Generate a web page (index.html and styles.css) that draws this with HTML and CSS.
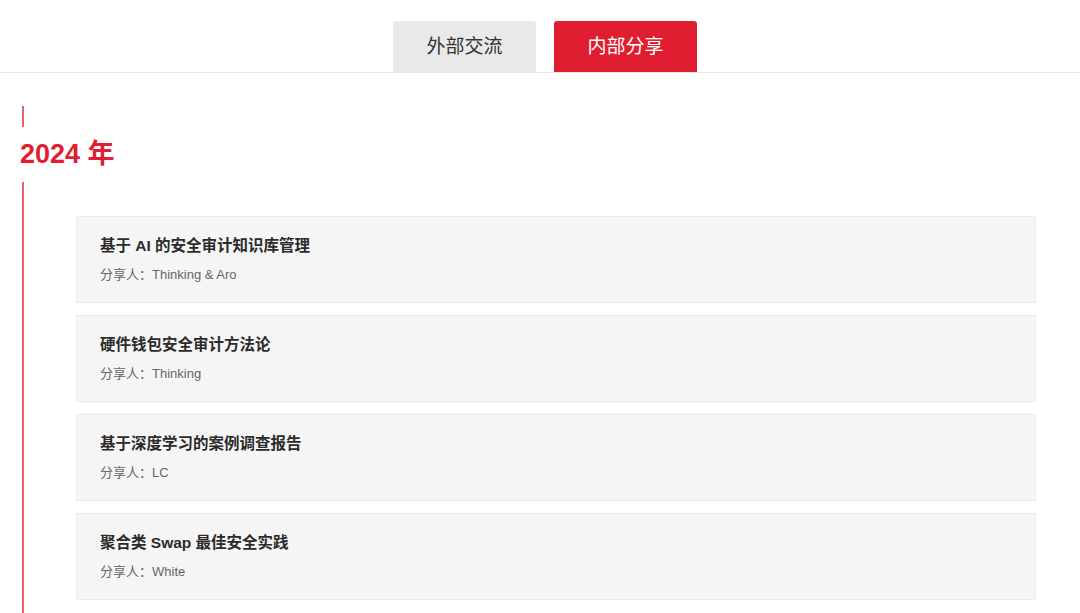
FILE: index.html
```html
<!DOCTYPE html>
<html lang="zh-CN">
<head>
    <meta charset="UTF-8">
    <meta name="viewport" content="width=device-width, initial-scale=1.0">
    <title>内部分享</title>
    <link rel="stylesheet" href="styles.css">
</head>
<body>

    <div class="tabs">
        <div class="tab">外部交流</div>
        <div class="tab active">内部分享</div>
    </div>

    <div class="timeline">
        <div class="year">2024 年</div>

        <div class="list">
            <div class="card">
                <div class="title">基于 AI 的安全审计知识库管理</div>
                <div class="author">分享人：Thinking &amp; Aro</div>
            </div>
            <div class="card">
                <div class="title">硬件钱包安全审计方法论</div>
                <div class="author">分享人：Thinking</div>
            </div>
            <div class="card">
                <div class="title">基于深度学习的案例调查报告</div>
                <div class="author">分享人：LC</div>
            </div>
            <div class="card">
                <div class="title">聚合类 Swap 最佳安全实践</div>
                <div class="author">分享人：White</div>
            </div>
        </div>
    </div>

</body>
</html>
```

FILE: styles.css
```css
body {
    font-family: "Liberation Sans", "Noto Sans CJK SC", sans-serif;
    background-color: #fff;
    margin: 0;
    color: #333;
}

.tabs {
    display: flex;
    justify-content: center;
    gap: 18px;
    padding: 21px 0 0 10px;
    border-bottom: 1px solid #e6e6e6;
}

.tab {
    width: 143px;
    height: 51px;
    line-height: 51px;
    text-align: center;
    font-size: 19px;
    background-color: #e9e9e9;
    color: #333;
    border-radius: 3px 3px 0 0;
}

.tab.active {
    background-color: #e01e32;
    color: #fff;
}

.timeline {
    margin: 33px 0 0 22px;
    border-left: 2px solid #e9606f;
    padding-top: 21px;
    padding-bottom: 20px;
}

.year {
    margin-left: -4px;
    height: 55px;
    line-height: 55px;
    background: #fff;
    color: #e01e32;
    font-size: 27px;
    font-weight: bold;
}

.list {
    margin: 34px 0 0 52px;
    width: 960px;
    display: flex;
    flex-direction: column;
    gap: 12px;
}

.card {
    box-sizing: border-box;
    height: 87px;
    padding: 19px 23px 0;
    background: #f5f5f5;
    border: 1px solid #ebebeb;
}

.title {
    font-size: 15.5px;
    font-weight: bold;
    line-height: 20px;
    color: #2b2b2b;
}

.author {
    margin-top: 10px;
    font-size: 13px;
    line-height: 18px;
    color: #666;
}
```
